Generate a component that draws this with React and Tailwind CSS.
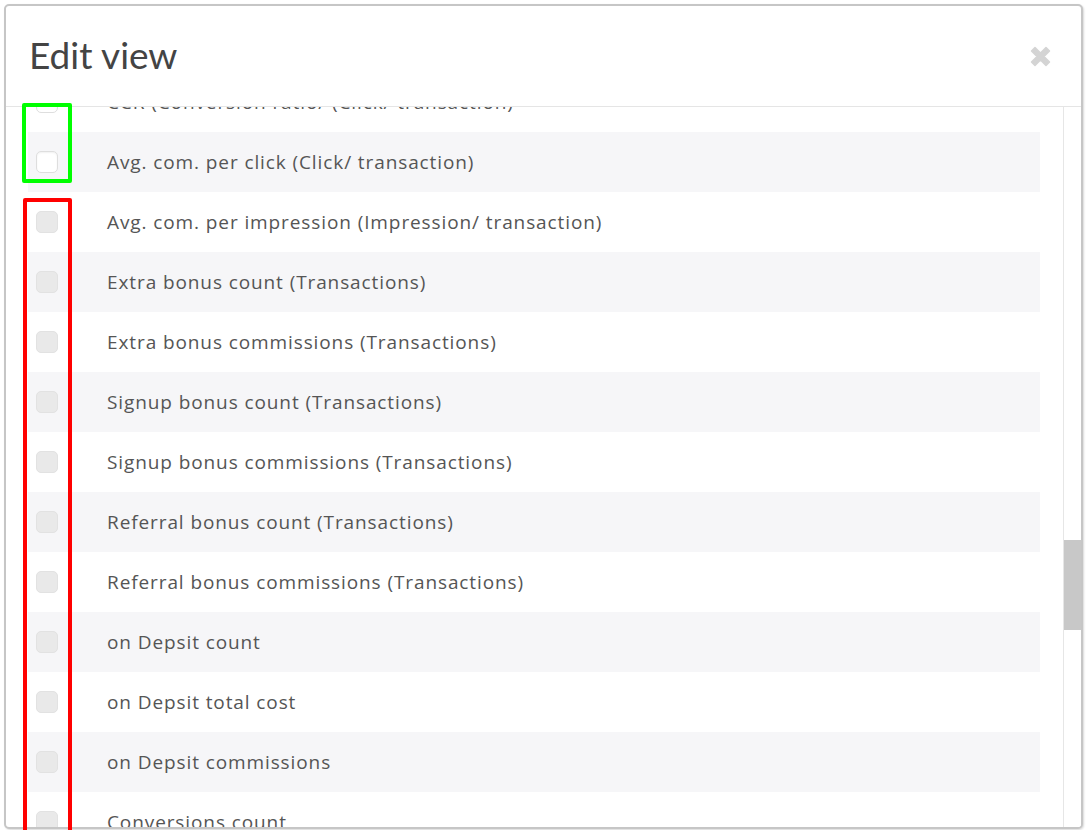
import { useState } from 'react'

const columns = [
  { label: 'CCR (Conversion ratio/ (Click/ transaction)', enabled: true },
  { label: 'Avg. com. per click (Click/ transaction)', enabled: true },
  { label: 'Avg. com. per impression (Impression/ transaction)', enabled: false },
  { label: 'Extra bonus count (Transactions)', enabled: false },
  { label: 'Extra bonus commissions (Transactions)', enabled: false },
  { label: 'Signup bonus count (Transactions)', enabled: false },
  { label: 'Signup bonus commissions (Transactions)', enabled: false },
  { label: 'Referral bonus count (Transactions)', enabled: false },
  { label: 'Referral bonus commissions (Transactions)', enabled: false },
  { label: 'on Depsit count', enabled: false },
  { label: 'on Depsit total cost', enabled: false },
  { label: 'on Depsit commissions', enabled: false },
  { label: 'Conversions count', enabled: false },
]

const CloseIcon = () => (
  <svg width="21" height="21" viewBox="0 0 21 21" className="text-[#d4d4d4]">
    <path
      d="M1.5 5 L5 1.5 L10.5 7 L16 1.5 L19.5 5 L14 10.5 L19.5 16 L16 19.5 L10.5 14 L5 19.5 L1.5 16 L7 10.5 Z"
      fill="currentColor"
      stroke="currentColor"
      strokeWidth="1.5"
      strokeLinejoin="round"
    />
  </svg>
)

const Checkbox = ({ enabled }) => (
  <span
    className={`block w-[22px] h-[22px] rounded-[5px] border ${
      enabled
        ? 'bg-white border-[#dedede] shadow-[inset_0_1px_2px_rgba(0,0,0,0.06)]'
        : 'bg-[#e9e9e9] border-[#e2e2e2]'
    }`}
  />
)

const Row = ({ item, striped }) => (
  <div className={`flex items-center h-[60px] ${striped ? 'bg-[#f6f6f8]' : 'bg-white'}`}>
    <div className="w-[79px] pl-[8px] flex items-center">
      <Checkbox enabled={item.enabled} />
    </div>
    <span
      className="text-[19px] text-[#555] tracking-[0.9px]"
      style={{ fontFamily: '"Open Sans", Lato, sans-serif' }}
    >
      {item.label}
    </span>
  </div>
)

export default function App() {
  const [items] = useState(columns)

  return (
    <div
      className="relative w-[1086px] h-[830px] bg-white overflow-hidden pt-[4px] pl-[4px]"
      style={{ fontFamily: 'Lato, "Open Sans", sans-serif' }}
    >
      <div className="w-[1079px] h-[825px] border-2 border-[#c6c6c6] rounded-[5px] bg-white flex flex-col overflow-hidden shadow-[1px_1px_2px_rgba(0,0,0,0.15)]">
        <div className="h-[101px] shrink-0 flex items-center justify-between pl-[23px] pr-[30px] border-b border-[#e5e5e5]">
          <h2 className="text-[37px] text-[#444] pb-[2px]">Edit view</h2>
          <CloseIcon />
        </div>
        <div className="flex flex-1 min-h-0">
          <div className="flex-1 overflow-hidden pl-[22px] pr-[23px]">
            <div className="-mt-[35px]">
              {items.map((item, i) => (
                <Row key={item.label} item={item} striped={i % 2 === 1} />
              ))}
            </div>
          </div>
          <div className="w-[18px] shrink-0 border-l border-[#e6e6e6] bg-white">
            <div className="mt-[433px] h-[90px] bg-[#c8c8c8]" />
          </div>
        </div>
      </div>

      {/* annotation frames */}
      <div className="absolute left-[22px] top-[103px] w-[50px] h-[80px] border-4 border-[#00ff00] rounded-[2px]" />
      <div className="absolute left-[23px] top-[198px] w-[49px] h-[660px] border-4 border-[#ff0000] rounded-[2px]" />
    </div>
  )
}
